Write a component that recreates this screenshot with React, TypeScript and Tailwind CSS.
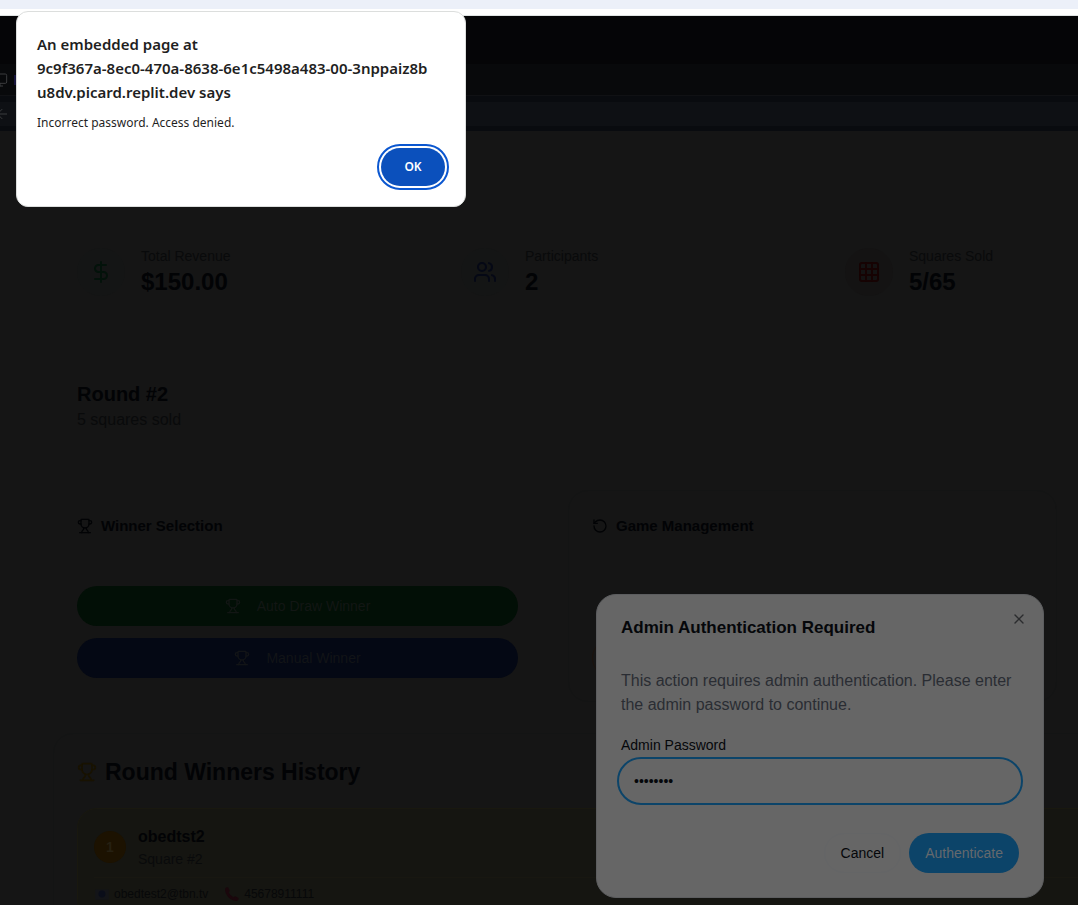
import { DollarSign, Users, Grid3x3, Trophy, RotateCcw, X, Monitor, ArrowLeft } from "lucide-react";
import type { ReactNode } from "react";

function Stat({ icon, tint, label, value }: { icon: ReactNode; tint: string; label: string; value: string }) {
  return (
    <div className="flex items-center gap-4 p-6">
      <div className={`flex size-12 items-center justify-center rounded-full ${tint}`}>{icon}</div>
      <div>
        <p className="text-sm leading-5 text-[#090a0b]">{label}</p>
        <p className="text-2xl leading-8 font-bold text-[#020305]">{value}</p>
      </div>
    </div>
  );
}

function BrowserBars() {
  return (
    <header>
      <div className="h-[9px] bg-[#ecf0f9]" />
      <div className="h-[7px] border-b border-[#dfe3e3] bg-white" />
      <div className="h-12 bg-[#050507]" />
      <div className="flex h-8 items-center border-b border-[#101114] bg-[#08090b]">
        <Monitor className="-ml-2 size-4 text-[#3b3c3e]" strokeWidth={1.5} />
        <span className="ml-1.5 h-2.5 w-1 bg-[#17153d]" />
      </div>
      <div className="bg-[#090b0f] pt-1.5 pb-[5px]">
        <div className="flex h-6 items-center bg-[#0e1014]">
          <ArrowLeft className="-ml-1.5 size-4 text-[#3b3c3e]" strokeWidth={1.5} />
        </div>
      </div>
    </header>
  );
}

function AdminPage() {
  return (
    <main className="w-[1181px] pt-[91px] pl-[53px]">
      <section className="grid grid-cols-3 gap-6">
        <Stat icon={<DollarSign className="size-6 text-[#03120a]" />} tint="bg-[#141515]" label="Total Revenue" value="$150.00" />
        <Stat icon={<Users className="size-6 text-[#050815]" />} tint="bg-[#141515]" label="Participants" value="2" />
        <Stat icon={<Grid3x3 className="size-6 text-[#160303]" />} tint="bg-[#141313]" label="Squares Sold" value="5/65" />
      </section>

      <section className="mt-[34px] px-6 pt-6">
        <h2 className="text-xl leading-7 font-bold text-[#020305]">Round #2</h2>
        <p className="text-base leading-6 text-[#090a0b]">5 squares sold</p>
      </section>

      <section className="mt-[58px] grid w-[1004px] grid-cols-2 gap-[26px]">
        <div className="p-6">
          <h3 className="flex items-center gap-2 text-[15px] leading-6 font-semibold text-[#020305]">
            <Trophy className="size-4" />
            Winner Selection
          </h3>
          <div className="mt-12 flex flex-col gap-3">
            <button className="flex h-10 items-center justify-center gap-4 rounded-[20px] bg-[#020f06] text-sm text-[#121614]">
              <Trophy className="size-4" />
              Auto Draw Winner
            </button>
            <button className="flex h-10 items-center justify-center gap-4 rounded-[20px] bg-[#040814] text-sm text-[#121417]">
              <Trophy className="size-4" />
              Manual Winner
            </button>
          </div>
        </div>
        <div className="rounded-[20px] border border-[#131414] p-[23px]">
          <h3 className="flex items-center gap-2 text-[15px] leading-6 font-semibold text-[#020305]">
            <RotateCcw className="size-4" />
            Game Management
          </h3>
          <div className="mt-[100px] h-10 rounded-[20px] border border-[#1b120c]" />
        </div>
      </section>

      <section className="mt-[31px] rounded-[20px] border border-[#131414] px-[23px] py-[22px]">
        <h2 className="flex items-center gap-2 text-[23px] leading-8 font-bold text-[#020305]">
          <Trophy className="size-5 text-[#181201]" />
          Round Winners History
        </h2>
        <article className="mt-5 rounded-[20px] border border-[#19180f] bg-[#151511] p-4">
          <div className="flex items-center gap-3">
            <span className="flex size-8 items-center justify-center rounded-full bg-[#1c1201] text-sm font-bold text-[#262012]">1</span>
            <div>
              <p className="text-base leading-6 font-bold text-[#020305]">obedtst2</p>
              <p className="text-sm leading-5 text-[#090a0b]">Square #2</p>
            </div>
          </div>
          <div className="mt-2 flex items-center gap-4 border-t border-[#181711] pt-2 text-xs leading-4 text-[#070809]">
            <span className="flex items-center gap-1">
              <svg viewBox="0 0 14 14" className="size-4" aria-hidden="true">
                <rect x="1" y="3" width="12" height="9" fill="#131418" />
                <circle cx="7" cy="7" r="3" fill="#0a0d19" />
              </svg>
              obedtest2@tbn.tv
            </span>
            <span className="flex items-center gap-1">
              <svg viewBox="0 0 14 14" className="size-4" aria-hidden="true">
                <path
                  d="M1 2 Q2 1 3.5 1.2 L5 4 Q5 5 4 5.4 Q5.5 8.5 8.6 10 Q9 9 10 9 L12.8 10.5 Q13 12 11.8 13 Q7.5 13.4 4 10 Q.6 6.5 1 2Z"
                  fill="#1a070c"
                />
              </svg>
              45678911111
            </span>
          </div>
        </article>
      </section>
    </main>
  );
}

function AuthDialog() {
  return (
    <form
      role="dialog"
      aria-labelledby="auth-title"
      className="absolute top-[594px] right-[34px] w-md rounded-[20px] border border-[#5c5d5f] bg-[#666666] p-6"
      onSubmit={(e) => e.preventDefault()}
    >
      <button type="button" aria-label="Close" className="absolute top-4 right-4 text-[#2b2c2e]">
        <X className="size-4" />
      </button>
      <h2 id="auth-title" className="text-[17px] leading-[18px] font-semibold text-[#05070a]">
        Admin Authentication Required
      </h2>
      <p className="mt-8 text-base leading-6 text-[#2a2d33]">
        This action requires admin authentication. Please enter the admin password to continue.
      </p>
      <label htmlFor="admin-password" className="mt-[18px] block text-sm leading-5 text-[#05070a]">
        Admin Password
      </label>
      <input
        id="admin-password"
        type="password"
        defaultValue="password"
        className="-mx-1 mt-0.5 block h-12 w-[406px] rounded-3xl border-2 border-[#0c4469] bg-transparent px-[15px] text-sm text-[#05070a] outline-none"
      />
      <div className="mt-7 flex justify-end gap-2">
        <button type="button" className="h-10 rounded-[20px] border border-[#646566] px-4 text-sm text-[#05070a]">
          Cancel
        </button>
        <button type="submit" className="h-10 rounded-[20px] bg-[#0c4469] px-4 text-sm text-[#65696d]">
          Authenticate
        </button>
      </div>
    </form>
  );
}

function AlertDialog() {
  return (
    <div
      role="alertdialog"
      aria-labelledby="alert-title"
      className="absolute top-[11px] left-4 w-[450px] rounded-xl border border-[#dcdedd] bg-white p-5 font-['Noto_Sans',sans-serif] text-[#1f1f1f]"
    >
      <h1 id="alert-title" className="text-[15px] leading-6 font-semibold whitespace-nowrap">
        An embedded page at
        <br />
        9c9f367a-8ec0-470a-8638-6e1c5498a483-00-3nppaiz8b
        <br />
        u8dv.picard.replit.dev says
      </h1>
      <p className="mt-[9px] text-xs leading-5">Incorrect password. Access denied.</p>
      <div className="mt-[15px] flex justify-end">
        <button className="h-[38px] w-16 rounded-[19px] bg-[#0b50bc] text-xs font-semibold text-white outline-2 outline-offset-2 outline-[#0b57d0]">
          OK
        </button>
      </div>
    </div>
  );
}

export default function App() {
  return (
    <div className="relative h-screen overflow-hidden bg-[#151515] font-['Liberation_Sans',Arial,sans-serif]">
      <BrowserBars />
      <AdminPage />
      <AuthDialog />
      <AlertDialog />
    </div>
  );
}
